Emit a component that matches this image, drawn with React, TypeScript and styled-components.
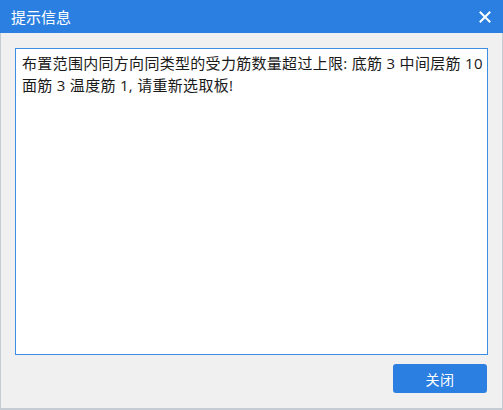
import React from "react";
import styled, { createGlobalStyle } from "styled-components";

const GlobalStyle = createGlobalStyle`
  html, body {
    margin: 0;
    padding: 0;
    background: #f0f0f0;
  }
  * {
    box-sizing: border-box;
  }
`;

const Dialog = styled.div`
  width: 503px;
  height: 410px;
  display: flex;
  flex-direction: column;
  background: #f0f0f0;
  border-left: 1px solid #c5ccd4;
  border-right: 1px solid #c5ccd4;
  border-bottom: 2px solid #c5ccd4;
  font-family: "Open Sans", "Noto Sans CJK SC", sans-serif;
`;

const TitleBar = styled.header`
  height: 33px;
  flex: none;
  display: flex;
  align-items: center;
  justify-content: space-between;
  padding: 0 10px 0 11px;
  background: #2b7fe0;
  color: #ffffff;
  margin: 0 -1px;
`;

const Title = styled.h1`
  margin: 0;
  font-size: 15px;
  font-weight: normal;
`;

const CloseIcon = styled.button`
  width: 16px;
  height: 16px;
  padding: 0;
  border: none;
  background: none;
  display: flex;
  align-items: center;
  justify-content: center;
`;

const Body = styled.main`
  flex: 1;
  display: flex;
  flex-direction: column;
  padding: 15px 14px 13px 14px;
  gap: 9px;
`;

const Message = styled.div`
  flex: 1;
  background: #ffffff;
  border: 1px solid #3a8ee6;
  padding: 3px 1px 5px 6px;
  font-size: 15px;
  letter-spacing: 0.3px;
  line-height: 22px;
  color: #1a1a1a;
`;

const Footer = styled.footer`
  display: flex;
  justify-content: flex-end;
`;

const PrimaryButton = styled.button`
  width: 94px;
  height: 29px;
  border: none;
  border-radius: 3px;
  background: #2b7fe0;
  color: #ffffff;
  font-family: inherit;
  font-size: 14px;
  letter-spacing: 0.5px;
  margin-right: 1px;
  margin-bottom: 2px;
`;

const App = () => (
  <>
    <GlobalStyle />
    <Dialog>
      <TitleBar>
        <Title>提示信息</Title>
        <CloseIcon aria-label="close">
          <svg width="12" height="12" viewBox="0 0 12 12">
            <path
              d="M1.5 1.5 L10.5 10.5 M10.5 1.5 L1.5 10.5"
              stroke="#ffffff"
              strokeWidth="2"
              strokeLinecap="square"
            />
          </svg>
        </CloseIcon>
      </TitleBar>
      <Body>
        <Message>
          布置范围内同方向同类型的受力筋数量超过上限: 底筋 3 中间层筋 10
          面筋 3 温度筋 1, 请重新选取板!
        </Message>
        <Footer>
          <PrimaryButton>关闭</PrimaryButton>
        </Footer>
      </Body>
    </Dialog>
  </>
);

export default App;
